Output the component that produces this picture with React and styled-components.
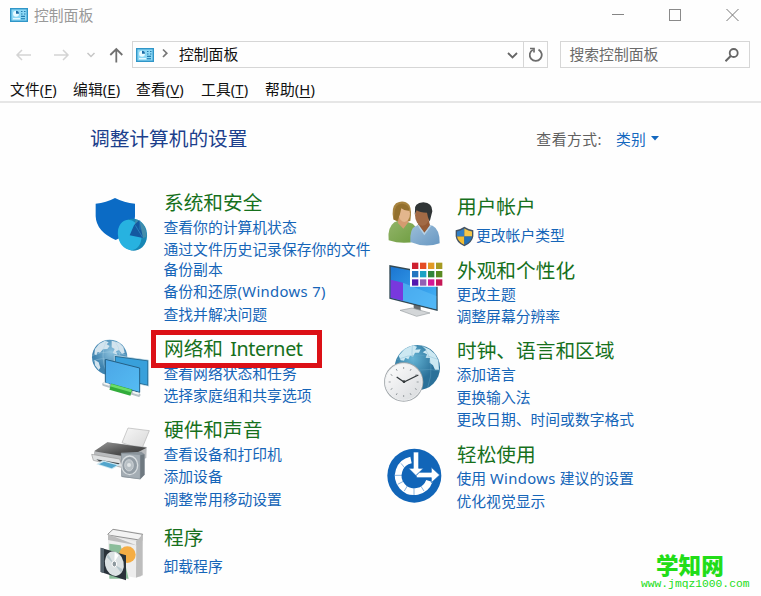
import React from "react";
import styled, { createGlobalStyle } from "styled-components";

const GlobalStyle = createGlobalStyle`
  * { box-sizing: border-box; }
  body { margin: 0; background: #fff; overflow: hidden; }
  svg { display: block; flex: none; }
`;

const Window = styled.div`
  display: flex;
  flex-direction: column;
  position: relative;
  width: 761px;
  height: 596px;
  background: #fefefe;
  color: #111;
  font-family: "Noto Sans", "Noto Sans CJK SC", sans-serif;
  font-size: 14.8px;
  white-space: nowrap;
  overflow: hidden;
`;

const TitleBar = styled.header`
  display: flex;
  align-items: center;
  height: 30px;
  padding: 0 22px 0 10px;
`;

const WindowTitle = styled.span`
  flex: 1;
  margin-left: 6px;
  color: #999;
  line-height: 20px;
`;

const WindowControls = styled.div`
  display: flex;
  gap: 45px;
`;

const NavBar = styled.div`
  display: flex;
  height: 27px;
  margin-top: 11px;
  padding: 0 11px 0 13px;
`;

const NavButtons = styled.div`
  display: flex;
  align-items: center;
  width: 119px;
`;

const Field = styled.div`
  display: flex;
  align-items: center;
  width: ${(p) => p.$width}px;
  margin-left: ${(p) => p.$gap || 0}px;
  border: 1px solid #d6d6d6;
  line-height: 20px;
  color: ${(p) => p.$color || "#111"};
`;

const FieldText = styled.span`
  flex: 1;
  padding: 0 0 2px ${(p) => p.$pad}px;
`;

const RefreshCell = styled.div`
  display: flex;
  align-items: center;
  justify-content: center;
  width: 24px;
  height: 25px;
  margin-left: 5px;
  border-left: 1px solid #d6d6d6;
`;

const MenuBar = styled.nav`
  display: flex;
  align-items: center;
  height: 35px;
  padding: 9px 0 0 10px;
  border-bottom: 2px solid #e6e6e6;
  line-height: 22px;
`;

const MenuItem = styled.span`
  width: ${(p) => p.$width}px;
  letter-spacing: 0.1px;
`;

const Key = styled.u`
  text-decoration-thickness: 1px;
  text-underline-offset: 2px;
`;

const PageHeader = styled.div`
  display: flex;
  align-items: center;
  height: 28px;
  margin-top: 21px;
  padding: 0 102px 0 90px;
`;

const PageTitle = styled.h1`
  flex: 1;
  margin: 0;
  padding-bottom: 1px;
  font-size: 19.7px;
  font-weight: 400;
  color: #1c3f8c;
`;

const ViewLabel = styled.span`
  color: #606060;
  margin-right: 14px;
  letter-spacing: 0.5px;
`;

const ViewValue = styled.span`
  color: #1468bf;
  margin-right: 5px;
  letter-spacing: 0.2px;
`;

const Columns = styled.main`
  display: grid;
  grid-template-columns: 293px 1fr;
  padding: 38px 0 0 90px;
`;

const Column = styled.div`
  padding-top: ${(p) => p.$top || 0}px;
`;

const Category = styled.section`
  display: grid;
  grid-template-columns: 74px 1fr;
  margin-bottom: ${(p) => p.$after || 0}px;
`;

const CategoryIcon = styled.svg`
  width: 68px;
  height: 53px;
  overflow: visible;
`;

const Heading = styled.h2`
  position: relative;
  width: max-content;
  height: ${(p) => p.$height}px;
  margin: 0;
  font-size: 19.7px;
  font-weight: 400;
  line-height: 26px;
  color: #16701c;
`;

const HeadingLatin = styled.span`
  margin-left: 2px;
  letter-spacing: -0.4px;
`;

const Highlight = styled.span`
  position: absolute;
  left: -13px;
  top: -6px;
  width: 171px;
  height: 38px;
  border: 5px solid #dc1016;
`;

const TaskLink = styled.a`
  display: flex;
  align-items: center;
  gap: 2px;
  padding: 1.6px 0;
  line-height: 19.5px;
  white-space: pre-line;
  color: #1565b8;
  margin-left: ${(p) => (p.$shield ? -2 : -0.5)}px;
`;

const Latin = styled.span`
  letter-spacing: 0.35px;
`;

const Watermark = styled.div`
  position: absolute;
  left: 641px;
  top: 552px;
  width: 110px;
  color: #22dd18;
`;

const WatermarkName = styled.div`
  padding-left: 15px;
  font: 900 22.6px/26px "Noto Sans CJK SC", sans-serif;
`;

const WatermarkUrl = styled.div`
  font: 11.3px/13px "Liberation Mono", monospace;
`;

function PanelIcon() {
  return (
    <svg width="18" height="14" viewBox="0 0 18 14">
      <rect x=".7" y=".7" width="16.6" height="12.6" fill="#8dd8f5" stroke="#3096c8" strokeWidth="1.4" />
      <circle cx="6" cy="5.7" r="3" fill="#e8faff" />
      <path d="M6 5.7V2.7a3 3 0 0 1 3 3z" fill="#176aa6" />
      <path d="M11 3.5h1.5M14 3.5h1.5M11 6h1.5M14 6h1.5M11 8.3h4" stroke="#247caf" strokeWidth="1.2" />
      <path d="M3 10.7h7" stroke="#e8faff" strokeWidth="1.3" />
      <path d="M11 10.7h4" stroke="#2b89ba" strokeWidth="1.3" />
    </svg>
  );
}

function SecurityIcon() {
  return (
    <CategoryIcon viewBox="30 15 204 159">
      <path d="M47 56Q79 53 105 39Q132 53 165 56V94Q163 141 107 165Q49 140 47 94Z" fill="#0b6bc5" />
      <ellipse cx="160" cy="149" rx="41" ry="48" fill="#1787b5" transform="rotate(-8 160 149)" />
      <ellipse cx="149" cy="150" rx="35" ry="46" fill="#27b2e0" transform="rotate(-12 149 150)" />
      <path d="M167 104Q188 108 197 134L200 155L187 160L164 121Z" fill="#438dab" />
      <path d="M162 121L178 105L182 125L189 159L149 151Z" fill="#1459a0" />
      <path d="M166 121L188 157M180 107V134" stroke="#2f93c5" strokeWidth="2" />
    </CategoryIcon>
  );
}

function NetworkIcon() {
  return (
    <CategoryIcon viewBox="30 33 204 159">
      <defs>
        <radialGradient id="netGlobe" cx=".55" cy=".35">
          <stop offset="0" stopColor="#8dc2de" /><stop offset="1" stopColor="#3f83af" />
        </radialGradient>
        <linearGradient id="netScreen" x1="0" y1="0" x2="1" y2="1">
          <stop offset="0" stopColor="#4ba6e6" /><stop offset="1" stopColor="#55bcf3" />
        </linearGradient>
      </defs>
      <circle cx="89" cy="97" r="53" fill="url(#netGlobe)" />
      <path d="M45 72l12-15 18-10 11 5-6 6 9 5-7 9-13 1-9 10-7-2-4 10-6-3zM95 47l22 6 13 13 4 17-8 4-9-12-9 4 4 10-14-5 6-12-9-5zM43 104l13 8 5 16-5 7-11-14z" fill="#d3e4ee" />
      <path d="M38 91Q89 70 140 91M38 109Q66 95 90 106M80 44Q58 90 80 145M103 46Q119 66 119 90" fill="none" stroke="#a9d2e7" strokeWidth="1.2" />
      <path d="M103 91L206 105V184L103 161Z" fill="#286d94" stroke="#dceef7" strokeWidth="2" />
      <path d="M107 96L202 109V179L107 157Z" fill="#38a0db" />
      <path d="M76 103L179 129V202L76 174Z" fill="url(#netScreen)" stroke="#235f85" strokeWidth="3" />
      <path d="M72 178L176 210" stroke="#b6c1c6" strokeWidth="11" strokeLinecap="round" />
      <path d="M91 185L154 203" stroke="#32ac3b" strokeWidth="20" />
      <path d="M93 181L154 198" stroke="#6bdd6a" strokeWidth="8" />
      <path d="M73 175L86 179M161 202L174 206" stroke="#f3f7f5" strokeWidth="6" strokeLinecap="round" />
    </CategoryIcon>
  );
}

function PrinterIcon() {
  return (
    <CategoryIcon viewBox="30 6 204 159">
      <defs>
        <linearGradient id="printerTop" x2="1" y2="1"><stop stopColor="#9a9a9a" /><stop offset=".55" stopColor="#535353" /><stop offset="1" stopColor="#303030" /></linearGradient>
        <linearGradient id="paper" y2="1"><stop stopColor="#f7f7f7" /><stop offset="1" stopColor="#d6d6d6" /></linearGradient>
      </defs>
      <path d="M144 39L208 47L185 103L126 83Z" fill="url(#paper)" stroke="#b4b4b4" strokeWidth="2" />
      <path d="M82 82L200 96L199 129L132 158L42 129V112Z" fill="#b9bbbd" />
      <path d="M82 82L200 98L145 126L42 109Z" fill="url(#printerTop)" />
      <path d="M35 118L119 132L128 158L40 136Z" fill="#dfe1e2" stroke="#999" strokeWidth="2" />
      <path d="M49 133L119 145L113 151L57 139Z" fill="#41484b" />
      <path d="M49 148L68 136L120 149L96 163Z" fill="#cbe6f1" />
      <path d="M57 148L72 140L111 151L95 160Z" fill="#52a5cc" />
      <path d="M124 113L184 110L194 118V179L181 193L125 186Z" fill="#8b949b" />
      <path d="M124 115L181 119V192L125 184Z" fill="#a4adb4" stroke="#89949c" strokeWidth="2" />
      <ellipse cx="149" cy="151" rx="24" ry="28" fill="#939da5" stroke="#d8dde0" strokeWidth="4" />
      <ellipse cx="147" cy="151" rx="13" ry="17" fill="#b7bfc4" stroke="#dce0e2" strokeWidth="2" />
      <circle cx="147" cy="150" r="6" fill="#e0e4e6" />
      <path d="M181 121L193 118V179L181 192Z" fill="#6f7980" />
    </CategoryIcon>
  );
}

function ProgramsIcon() {
  return (
    <CategoryIcon viewBox="30 30 204 159">
      <path d="M84 56L101 42L188 55L182 186L88 170Z" fill="#e5e5e5" />
      <path d="M84 57L99 43L188 58L178 75L84 60Z" fill="#f3f3f3" stroke="#929292" strokeWidth="3" />
      <path d="M84 62L169 80L168 188L84 174Z" fill="#ededed" />
      <path d="M169 79L188 60V181L168 188Z" fill="#bdbdbd" />
      <path d="M84 58V75L169 91V77L188 60V76L169 91" fill="#bcbcbc" />
      <path d="M88 86L122 91L146 191H88Z" fill="#8bbd9a" />
      <circle cx="142" cy="119" r="25" fill="#f5ad44" />
      <path d="M62 98L138 121V196L62 171Z" fill="#29323a" />
      <path d="M62 98L72 101V174L62 171Z" fill="#55636d" />
      <ellipse cx="103" cy="146" rx="28" ry="37" fill="#dce2e4" transform="rotate(-12 103 146)" />
      <path d="M101 147L79 125L85 118ZM105 150L128 163L123 173Z" fill="#b8c8ce" />
      <path d="M103 142L104 112L116 121Z" fill="#fff" />
      <ellipse cx="103" cy="147" rx="7" ry="9" fill="#8d989e" stroke="#fff" strokeWidth="3" />
    </CategoryIcon>
  );
}

function UsersIcon() {
  return (
    <CategoryIcon viewBox="24 12 204 159">
      <defs>
        <linearGradient id="greenShirt" y2="1"><stop stopColor="#94b56b" /><stop offset="1" stopColor="#6e9d40" /></linearGradient>
        <linearGradient id="blueShirt" y2="1"><stop stopColor="#9dbfda" /><stop offset="1" stopColor="#6797c2" /></linearGradient>
      </defs>
      <path d="M55 88Q48 53 63 40Q86 27 103 45Q111 60 106 93L75 100Z" fill="#a7833e" />
      <path d="M41 151Q36 113 58 97L78 89L113 101Q130 112 123 153Q85 165 41 151Z" fill="url(#greenShirt)" />
      <path d="M73 79L68 98L85 116L100 97L97 78Z" fill="#d49b70" />
      <ellipse cx="88" cy="71" rx="17" ry="25" fill="#e3b68d" />
      <path d="M58 72Q60 39 82 41Q102 43 104 62Q87 63 79 55Q76 75 67 91L56 89Z" fill="#93702e" />
      <path d="M106 156Q104 116 121 109L139 101L173 107Q195 118 194 160Q151 175 106 156Z" fill="url(#blueShirt)" />
      <path d="M132 90L128 107L149 130L165 105L160 87Z" fill="#955a35" />
      <ellipse cx="142" cy="76" rx="22" ry="31" fill="#a26a45" />
      <path d="M120 62Q116 39 145 37Q172 38 172 64L164 95Q158 82 156 68Q134 68 125 61L119 74Z" fill="#303536" />
      <path d="M129 105L148 132L167 107" fill="none" stroke="#b5d0e5" strokeWidth="4" />
    </CategoryIcon>
  );
}

const swatches = [
  ["#ce2130", "#e54c24", "#e29a25", "#a69a22"],
  ["#2476c0", "#1aa2c4", "#32853b", "#598a21"],
  ["#5318ae", "#9360b4", "#d31996", "#c61756"],
];

function AppearanceIcon() {
  return (
    <CategoryIcon viewBox="24 9 204 159">
      <defs><linearGradient id="display" x2="1" y2="1"><stop stopColor="#1b75d1" /><stop offset="1" stopColor="#47b8fa" /></linearGradient></defs>
      <path d="M116 141L137 148V169L116 164Z" fill="#666c70" />
      <path d="M75 166L111 159L165 174L125 184Z" fill="#d3d6d8" stroke="#999ea1" strokeWidth="2" />
      <path d="M43 30L188 57V168L43 131Z" fill="#324955" />
      <path d="M47 35L184 61V163L47 128Z" fill="url(#display)" />
      <path d="M47 74L84 83V137L47 128Z" fill="#7938dd" />
      <path d="M84 83L184 123V163L84 137Z" fill="#59baf6" opacity=".65" />
      <path d="M105 18H207V95H105Z" fill="#fff" />
      {swatches.map((row, r) => row.map((fill, c) => (
        <rect key={`${r}-${c}`} x={111 + c * 24} y={23 + r * 25} width="19" height="19" fill={fill} />
      )))}
    </CategoryIcon>
  );
}

function ClockIcon() {
  const ticks = Array.from({ length: 12 }, (_, i) => i * 30);
  return (
    <CategoryIcon viewBox="24 9 204 159">
      <defs>
        <radialGradient id="clockGlobe" cx=".4" cy=".3"><stop stopColor="#65b5d6" /><stop offset="1" stopColor="#2b7199" /></radialGradient>
        <linearGradient id="dial" x2="1" y2="1"><stop stopColor="#fff" /><stop offset="1" stopColor="#d7d9dc" /></linearGradient>
      </defs>
      <circle cx="127" cy="98" r="68" fill="url(#clockGlobe)" />
      <path d="M71 62L89 42L113 31L126 35L121 44L137 43L132 53L120 53L114 65L105 62L100 73L91 68L87 77L77 76ZM141 33L163 43L180 57L190 76L192 104L180 104L174 91L164 83L165 69L152 68L156 58L143 52L154 45Z" fill="#cce8f2" />
      <path d="M66 74Q130 46 191 74M112 30Q104 75 142 164M145 31Q184 88 158 158M135 105Q166 100 195 108" fill="none" stroke="#6faecb" strokeWidth="1" />
      <circle cx="86" cy="141" r="59" fill="#a3a8ac" />
      <circle cx="86" cy="141" r="55" fill="url(#dial)" stroke="#eef0f1" strokeWidth="3" />
      {ticks.map((angle) => <path key={angle} d="M86 96V102" stroke="#8a9094" strokeWidth="2.5" transform={`rotate(${angle} 86 141)`} />)}
      <path d="M65 126L87 141L130 120" fill="none" stroke="#33383b" strokeWidth="4" />
      <circle cx="87" cy="140" r="4" fill="#33383b" />
    </CategoryIcon>
  );
}

function AccessIcon() {
  return (
    <CategoryIcon viewBox="24 21 204 159">
      <circle cx="118" cy="122" r="81" fill="#1165b8" />
      <path d="M108 75A48 48 0 1 0 163 138" fill="none" stroke="#fff" strokeWidth="20" />
      <path d="M60 121H82M68 148L87 138M88 168L98 151M117 161V180M136 151L147 168M78 85L91 101" stroke="#1165b8" strokeWidth="1.5" />
      <path d="M115 51H131V100H145L123 122L101 100H115Z" fill="#fff" stroke="#1165b8" strokeWidth="2" />
      <path d="M123 122L133 112H169V97L194 120L169 143V128H126Z" fill="#fff" stroke="#1165b8" strokeWidth="2" />
    </CategoryIcon>
  );
}

function ShieldIcon() {
  return (
    <svg width="19" height="21" viewBox="0 0 57 62">
      <path d="M28 2Q42 11 55 12V30Q52 50 28 60Q4 50 2 30V12Q15 11 28 2Z" fill="#435365" />
      <path d="M28 7Q16 14 6 16V31H28Z" fill="#327fc4" />
      <path d="M28 7Q40 14 51 16V31H28Z" fill="#f4c649" />
      <path d="M6 31H28V56Q9 47 6 31Z" fill="#f3bd32" />
      <path d="M28 31H51Q48 48 28 56Z" fill="#2271b9" />
    </svg>
  );
}

const leftCategories = [
  { title: "系统和安全", Icon: SecurityIcon, after: 9.7, links: ["查看你的计算机状态", "通过文件历史记录保存你的文件\n备份副本", "备份和还原(Windows 7)", "查找并解决问题"] },
  { title: "网络和 ", latin: "Internet", Icon: NetworkIcon, after: 9.6, marked: true, links: ["查看网络状态和任务", "选择家庭组和共享选项"] },
  { title: "硬件和声音", Icon: PrinterIcon, after: 13.9, links: ["查看设备和打印机", "添加设备", "调整常用移动设置"] },
  { title: "程序", Icon: ProgramsIcon, height: 30.5, links: ["卸载程序"] },
];

const rightCategories = [
  { title: "用户帐户", Icon: UsersIcon, after: 10, height: 30, shield: true, links: ["更改帐户类型"] },
  { title: "外观和个性化", Icon: AppearanceIcon, after: 9.6, height: 25, links: ["更改主题", "调整屏幕分辨率"] },
  { title: "时钟、语言和区域", Icon: ClockIcon, after: 10.6, height: 25.2, links: ["添加语言", "更换输入法", "更改日期、时间或数字格式"] },
  { title: "轻松使用", Icon: AccessIcon, height: 25.4, links: ["使用 Windows 建议的设置", "优化视觉显示"] },
];

function LinkText({ text }) {
  const parts = text.split(/([A-Za-z()][A-Za-z0-9() ]*)/);
  return <span>{parts.map((part, i) => (i % 2 ? <Latin key={i}>{part}</Latin> : part))}</span>;
}

function CategoryList({ items, top }) {
  return (
    <Column $top={top}>
      {items.map(({ title, latin, Icon, after, height = 26, marked, shield, links }) => (
        <Category key={title} $after={after}>
          <Icon />
          <div>
            <Heading $height={height}>{title}{latin && <HeadingLatin>{latin}</HeadingLatin>}{marked && <Highlight />}</Heading>
            {links.map((text) => (
              <TaskLink key={text} $shield={shield}>{shield && <ShieldIcon />}<LinkText text={text} /></TaskLink>
            ))}
          </div>
        </Category>
      ))}
    </Column>
  );
}

const menus = [["文件", "F", 63], ["编辑", "E", 63], ["查看", "V", 65], ["工具", "T", 64], ["帮助", "H", 60]];

export default function App() {
  return (
    <Window>
      <GlobalStyle />
      <TitleBar>
        <PanelIcon />
        <WindowTitle>控制面板</WindowTitle>
        <WindowControls>
          <svg width="12" height="12" viewBox="0 0 12 12"><path d="M0 5.500H12" stroke="#858585" /></svg>
          <svg width="12" height="12" viewBox="0 0 12 12"><rect x=".5" y=".5" width="11" height="11" fill="none" stroke="#8a8a8a" /></svg>
          <svg width="13" height="12" viewBox="0 0 13 12"><path d="M.5 0L12.500 12M12.500 0L.5 12" stroke="#777" /></svg>
        </WindowControls>
      </TitleBar>
      <NavBar>
        <NavButtons>
          <svg width="119" height="27" viewBox="0 0 119 27" fill="none">
            <path d="M18 14H4M9 9L4 14L9 19M41 14H55M50 9L55 14L50 19" stroke="#d4d4d4" strokeWidth="1.5" />
            <path d="M74.500 12L78 15.500L81.500 12" stroke="#c6c6c6" strokeWidth="1.500" />
            <path d="M103.300 21.500V8M97.300 14L103.300 8L109.300 14" stroke="#707070" strokeWidth="1.800" />
          </svg>
        </NavButtons>
        <Field $width={416}>
          <svg width="3" height="1" />
          <PanelIcon />
          <svg width="14" height="14" viewBox="0 0 14 14" fill="none"><path d="M9 1.500L12.800 5.200L9 9" stroke="#777" strokeWidth="1.700" /></svg>
          <FieldText $pad={11}>控制面板</FieldText>
          <svg width="11" height="8" viewBox="0 0 11 8" fill="none"><path d="M1 2L5.500 6.500L10 2" stroke="#666" strokeWidth="1.800" /></svg>
          <RefreshCell>
            <svg width="14" height="15" viewBox="0 0 14 15" fill="none">
              <path d="M9.500 2.600A6 6 0 1 1 3.800 2.700" stroke="#6c6c6c" strokeWidth="1.800" />
              <path d="M1 1.500H5V5.500" stroke="#6c6c6c" strokeWidth="1.700" />
            </svg>
          </RefreshCell>
        </Field>
        <Field $width={190} $gap={12} $color="#6a6a6a">
          <FieldText $pad={8.5}>搜索控制面板</FieldText>
          <svg width="24" height="16" viewBox="0 0 24 16" fill="none">
            <circle cx="8.700" cy="6" r="4" stroke="#666" strokeWidth="1.800" /><path d="M5.700 9L.5 14.200" stroke="#666" strokeWidth="2" />
          </svg>
        </Field>
      </NavBar>
      <MenuBar>
        {menus.map(([name, key, width]) => <MenuItem key={key} $width={width}>{name}(<Key>{key}</Key>)</MenuItem>)}
      </MenuBar>
      <PageHeader>
        <PageTitle>调整计算机的设置</PageTitle>
        <ViewLabel>查看方式:</ViewLabel>
        <ViewValue>类别</ViewValue>
        <svg width="8" height="5" viewBox="0 0 8 5"><path d="M0 0H8L4 4.500Z" fill="#1468bf" /></svg>
      </PageHeader>
      <Columns>
        <CategoryList items={leftCategories} />
        <CategoryList items={rightCategories} top={4} />
      </Columns>
      <Watermark>
        <WatermarkName>学知网</WatermarkName>
        <WatermarkUrl>www.jmqz1000.com</WatermarkUrl>
      </Watermark>
    </Window>
  );
}
